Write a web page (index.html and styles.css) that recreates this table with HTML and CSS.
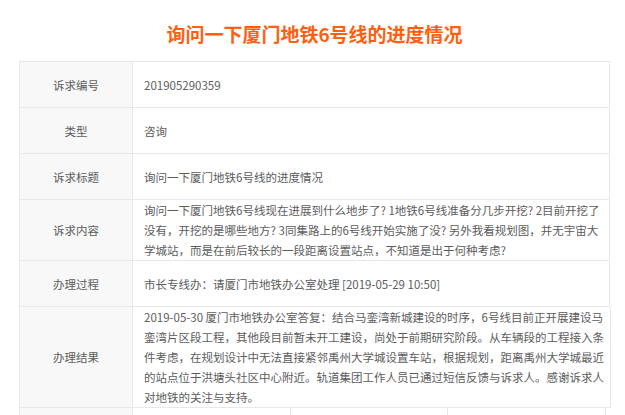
FILE: index.html
```html
<!DOCTYPE html>
<html lang="zh-CN">
<head>
<meta charset="utf-8">
<title>询问一下厦门地铁6号线的进度情况</title>
<link rel="stylesheet" href="styles.css">
</head>
<body>
<div class="page">
  <h1 class="title">询问一下厦门地铁6号线的进度情况</h1>
  <div class="sheet">
    <div class="row">
      <div class="label">诉求编号</div>
      <div class="value">201905290359</div>
    </div>
    <div class="row">
      <div class="label">类型</div>
      <div class="value">咨询</div>
    </div>
    <div class="row">
      <div class="label">诉求标题</div>
      <div class="value">询问一下厦门地铁6号线的进度情况</div>
    </div>
    <div class="row">
      <div class="label">诉求内容</div>
      <div class="value">询问一下厦门地铁6号线现在进展到什么地步了? 1地铁6号线准备分几步开挖? 2目前开挖了<br>没有，开挖的是哪些地方? 3同集路上的6号线开始实施了没? 另外我看规划图，并无宇宙大<br>学城站，而是在前后较长的一段距离设置站点，不知道是出于何种考虑?</div>
    </div>
    <div class="row">
      <div class="label">办理过程</div>
      <div class="value">市长专线办：请厦门市地铁办公室处理 [2019-05-29 10:50]</div>
    </div>
    <div class="row">
      <div class="label">办理结果</div>
      <div class="value">2019-05-30 厦门市地铁办公室答复：结合马銮湾新城建设的时序，6号线目前正开展建设马<br>銮湾片区段工程，其他段目前暂未开工建设，尚处于前期研究阶段。从车辆段的工程接入条<br>件考虑，在规划设计中无法直接紧邻禹州大学城设置车站，根据规划，距离禹州大学城最近<br>的站点位于洪塘头社区中心附近。轨道集团工作人员已通过短信反馈与诉求人。感谢诉求人<br>对地铁的关注与支持。</div>
    </div>
    <div class="row row-quad">
      <div class="label"></div>
      <div class="value"></div>
      <div class="value"></div>
      <div class="value"></div>
    </div>
  </div>
</div>
</body>
</html>
```

FILE: styles.css
```css
html, body {
  margin: 0;
  padding: 0;
  background: #ffffff;
}

body {
  font-family: "Noto Sans CJK SC", "Noto Sans", sans-serif;
  color: #5c5c5c;
}

.page {
  width: 591px;
  margin-left: 19px;
  padding-top: 19px;
}

.title {
  margin: 0 0 12px 0;
  font-size: 19px;
  line-height: 30px;
  font-weight: bold;
  color: #ff6010;
  text-align: center;
}

.sheet {
  border-top: 1px solid #e8e8e8;
  border-left: 1px solid #e8e8e8;
}

.row {
  display: grid;
  grid-template-columns: 113px 1fr;
  font-size: 11.5px;
  line-height: 20px;
}

.row-quad {
  grid-template-columns: 113px 158px 157px 158px;
  min-height: 45px;
}

.label,
.value {
  border-right: 1px solid #e8e8e8;
  border-bottom: 1px solid #e8e8e8;
  min-height: 45px;
  display: flex;
  align-items: center;
}

.label {
  background: #f8f8f8;
  justify-content: center;
}

.value {
  padding: 0 6px 0 11px;
  white-space: nowrap;
}
```
